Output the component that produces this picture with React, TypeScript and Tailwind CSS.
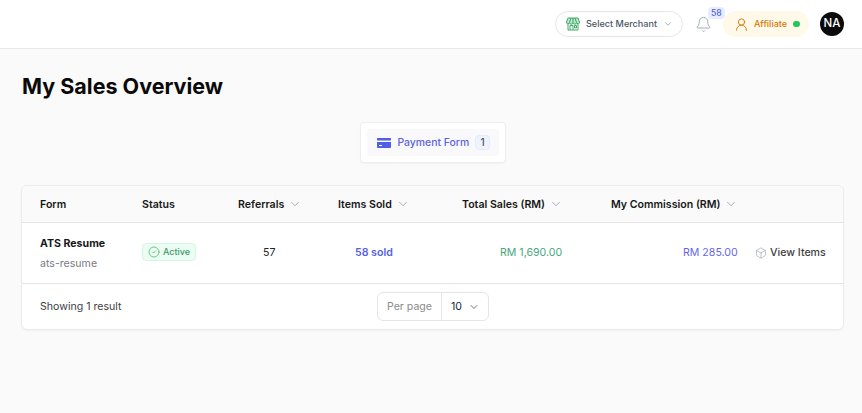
import { Bell, Box, ChevronDown, CircleCheck, UserRound } from "lucide-react";

const rowGrid = "grid grid-cols-[102px_96px_100px_124px_149px_144px_1fr] items-center pl-[18px]";

function SortHead({ label }: { label: string }) {
  return (
    <div className="flex items-center gap-[4px]">
      <span>{label}</span>
      <ChevronDown className="size-[14px] text-gray-400" strokeWidth={1.5} />
    </div>
  );
}

function StoreIcon() {
  return (
    <svg viewBox="0 0 14 14" fill="none" stroke="#3fa868" strokeWidth="1" className="size-[14px] mr-[6px]">
      <path d="M2 6.5v6.5h10V6.5" />
      <path d="M2 1h10l1.5 4a1.5 1.5 0 0 1-3 .5 1.7 1.7 0 0 1-3.500 0 1.700 1.700 0 0 1-3.500 0 1.500 1.500 0 0 1-3-.5z" fill="#bfe6cc" />
      <path d="M5 1 3.500 5.500M9 1l1.500 4.500M7 1v4.500" />
      <path d="M4 13V8.500h3V13M8.500 8.500h2V11h-2z" />
    </svg>
  );
}

function Header() {
  return (
    <header className="h-[49px] bg-white border-b border-[#e8e8e8] flex items-center justify-end">
      <button className="h-[26px] w-[128px] rounded-full border border-[#e5e7eb] flex items-center pl-[10px] text-[9.1px] text-[#4b5563] font-medium">
        <StoreIcon />
        Select Merchant
        <ChevronDown className="size-[10px] text-gray-400 ml-[6px]" />
      </button>
      <div className="relative ml-[12px] w-[16px] h-[16px]">
        <Bell className="size-[17px] text-gray-400" strokeWidth={1.25} />
        <span className="absolute top-[-9px] left-[13px] h-[12px] px-[3px] rounded bg-[#e7edff] text-[#4f63e0] text-[8.6px] leading-[12px] font-medium">
          58
        </span>
      </div>
      <div className="ml-[12px] h-[26px] w-[86px] rounded-full bg-[#fef9e8] flex items-center pl-[11px] text-[9px] text-[#d97706] font-medium">
        <UserRound className="size-[15px] mr-[5px]" strokeWidth={1.5} />
        Affiliate
        <span className="ml-[6px] size-[6.5px] rounded-full bg-[#22c55e]" />
      </div>
      <div className="ml-[11px] mr-[18px] size-[24px] rounded-full bg-[#0a0a0a] text-white text-[11.5px] font-medium flex items-center justify-center">
        NA
      </div>
    </header>
  );
}

function PaymentTabs() {
  return (
    <div className="flex justify-center mt-[21px]">
      <div className="ml-[3px] h-[41px] w-[146px] bg-white border border-[#eeeeee] rounded shadow-[0_1px_2px_rgba(0,0,0,0.04)] p-[6px]">
        <div className="h-[27px] rounded bg-[#f9f9fb] flex items-center pl-[10px] text-[10.4px] font-medium text-[#5b63e6]">
          <svg viewBox="0 0 14 10" className="w-[14px] h-[10px] mr-[7px]">
            <rect x="0" y="0" width="14" height="2.5" rx="0.6" fill="#4f5fe6" />
            <path d="M0 4h14v5a1 1 0 0 1-1 1H1a1 1 0 0 1-1-1z" fill="#4f5fe6" />
            <rect x="2" y="7" width="3" height="1" fill="#fff" />
          </svg>
          Payment Form
          <span className="ml-[6px] size-[15px] rounded bg-[#eef3fe] border border-[#e3eafc] text-[10px] text-[#4b5563] flex items-center justify-center">
            1
          </span>
        </div>
      </div>
    </div>
  );
}

function SalesTable() {
  return (
    <div className="mt-[22px] mx-[21px] w-[823px] rounded-md border border-[#ebebeb] bg-white shadow-[0_1px_2px_rgba(0,0,0,0.04)] overflow-hidden">
      <div className={`${rowGrid} h-[37px] pt-[1px] bg-[#fafafa] border-b border-[#e5e5e5] text-[10.6px] font-semibold text-[#171717]`}>
        <div>Form</div>
        <div>Status</div>
        <SortHead label="Referrals" />
        <SortHead label="Items Sold" />
        <SortHead label="Total Sales (RM)" />
        <SortHead label="My Commission (RM)" />
        <div />
      </div>
      <div className={`${rowGrid} h-[61px] border-b border-[#e5e5e5] text-[10.6px]`}>
        <div className="pt-[1px]">
          <div className="font-bold text-[#171717]">ATS Resume</div>
          <div className="mt-[4px] text-[#7b7b85]">ats-resume</div>
        </div>
        <div>
          <span className="inline-flex h-[18px] w-[54px] items-center rounded bg-[#ecfdf3] border border-[#d5f5e0] pl-[5px] text-[9px] font-medium text-[#3b9a68]">
            <CircleCheck className="size-[12px] mr-[3px] text-[#3fb56f]" strokeWidth={1.5} />
            Active
          </span>
        </div>
        <div className="pl-[25px] text-[#262626]">57</div>
        <div className="pl-[17px] font-semibold text-[#5560e0]">58 sold</div>
        <div className="pl-[38px] text-[#46a77c]">RM 1,690.00</div>
        <div className="pl-[72px] text-[#6468ec] whitespace-nowrap">RM 285.00</div>
        <div className="flex items-center text-[#404040] font-medium whitespace-nowrap">
          <Box className="size-[12px] mr-[3px] text-gray-400" strokeWidth={1.25} />
          View Items
        </div>
      </div>
      <div className="relative h-[45px] flex items-center pl-[18px] text-[10.6px] text-[#404040]">
        Showing 1 result
        <div className="absolute left-[355px] top-[8px] h-[29px] w-[112px] rounded-md border border-[#e5e5e5] flex items-center">
          <span className="w-[64px] h-full flex items-center justify-center border-r border-[#e5e5e5] text-[#8a8a8a]">
            Per page
          </span>
          <span className="pl-[9px] text-[#171f3a]">10</span>
          <ChevronDown className="size-[12px] ml-[6px] text-gray-500" />
        </div>
      </div>
    </div>
  );
}

export default function App() {
  return (
    <div className="w-[862px] h-[413px] overflow-hidden bg-[#fafafa] font-['Inter',sans-serif]">
      <Header />
      <h1 className="ml-[22px] mt-[22px] text-[21.5px] leading-[30px] font-bold text-[#0a0a0a]">
        My Sales Overview
      </h1>
      <PaymentTabs />
      <SalesTable />
    </div>
  );
}
